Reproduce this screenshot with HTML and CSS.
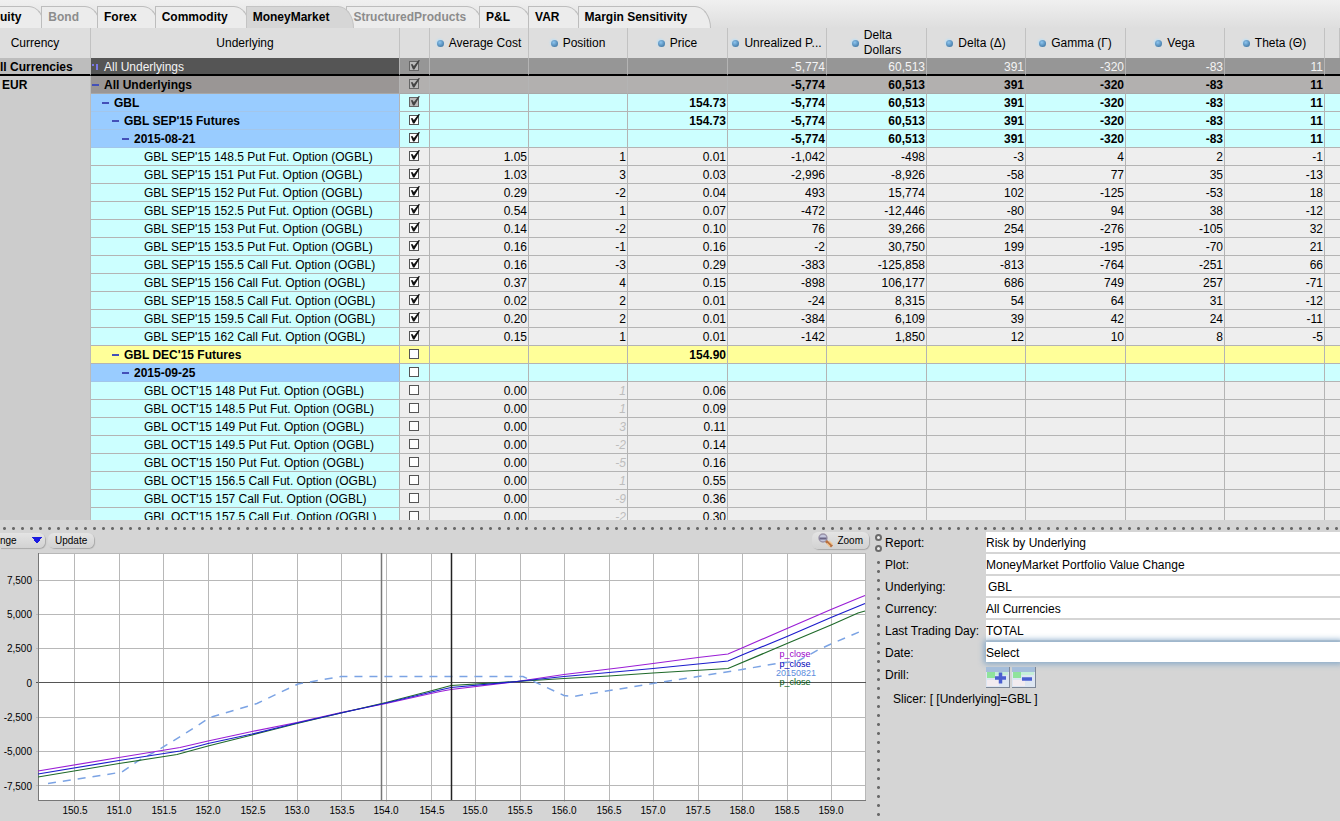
FILE: index.html
```html
<!DOCTYPE html>
<html lang="en">
<head>
<meta charset="utf-8">
<title>Risk by Underlying</title>
<link rel="stylesheet" href="styles.css">
<script src="app.js" defer></script>
</head>
<body>
<nav class="tabs">
  <button class="tab tab-first">uity</button>
  <button class="tab tab-off">Bond</button>
  <button class="tab">Forex</button>
  <button class="tab">Commodity</button>
  <button class="tab tab-active">MoneyMarket</button>
  <button class="tab tab-off tab-wide">StructuredProducts</button>
  <button class="tab">P&amp;L</button>
  <button class="tab">VAR</button>
  <button class="tab">Margin Sensitivity</button>
</nav>

<main class="grid-pane">
  <table class="grid">
    <colgroup>
      <col class="c-cur"><col class="c-name"><col class="c-check">
      <col class="c-a"><col class="c-a"><col class="c-b"><col class="c-a"><col class="c-b"><col class="c-a"><col class="c-b"><col class="c-a"><col class="c-b"><col>
    </colgroup>
    <thead>
      <tr>
        <th class="h-cur">Currency</th>
        <th>Underlying</th>
        <th></th>
        <th><span class="h"><i class="dot"></i>Average Cost</span></th>
        <th><span class="h"><i class="dot"></i>Position</span></th>
        <th><span class="h"><i class="dot"></i>Price</span></th>
        <th><span class="h"><i class="dot"></i>Unrealized P...</span></th>
        <th><span class="h"><i class="dot"></i><span>Delta<br>Dollars</span></span></th>
        <th><span class="h"><i class="dot"></i>Delta (Δ)</span></th>
        <th><span class="h"><i class="dot"></i>Gamma (Γ)</span></th>
        <th><span class="h"><i class="dot"></i>Vega</span></th>
        <th><span class="h"><i class="dot"></i>Theta (Θ)</span></th>
        <th></th>
      </tr>
    </thead>
    <tbody id="rows"></tbody>
  </table>
</main>

<div class="split-h"></div>

<section class="lower">
  <div class="plot-pane">
    <div class="toolbar">
      <select class="pill combo" aria-label="Plot type"><option>nge</option></select>
      <button class="pill update">Update</button>
      <button class="pill zoom">
        <svg width="16" height="15" viewBox="0 0 16 15" aria-hidden="true">
          <circle cx="5" cy="5" r="4" fill="#c3c6dd" stroke="#9a93a8" stroke-width="1.4"/>
          <path d="M1.500 5.500h7" stroke="#6a6585" stroke-width="2"/>
          <path d="M8 8l6 5.500" stroke="#b9703f" stroke-width="3"/>
          <path d="M9 10.500l3 3M11 8l3.500 3.500" stroke="#f3c48e" stroke-width="1.200"/>
        </svg>
        Zoom
      </button>
    </div>
    <svg class="chart" viewBox="0 549 873 272" role="img" aria-label="MoneyMarket Portfolio Value Change">
      <rect x="38" y="553" width="828" height="248" fill="#fff"/>
      <path class="gridline" d="M74.500 553v249M119.500 553v249M163.500 553v249M208.500 553v249M252.500 553v249M297.500 553v249M341.500 553v249M386.500 553v249M431.500 553v249M475.500 553v249M520.500 553v249M564.500 553v249M609.500 553v249M653.500 553v249M698.500 553v249M742.500 553v249M787.500 553v249M831.500 553v249"/>
      <path class="gridline" d="M36 580.500h830M36 614.500h830M36 648.500h830M36 717.500h830M36 751.500h830M36 785.500h830M38 553.500h828M865.500 553v248"/>
      <path d="M36 682.500h830" stroke="#555"/>
      <path d="M38.500 553v248M38 800.500h828" stroke="#777" fill="none"/>
      <path d="M381.500 553v247" stroke="#777" stroke-width="1.500"/>
      <path class="line dashed" d="M48 783.500L107 774.500 122 772 138 761 160 749 182 735.500 210 717.500 257 703.500 298 684 341 676.500H523L564 695.500 573 696.500 653 683.500 698 676.500 742 669.500 777 663.500 798 661 818 650 831 644 865 629.500"/>
      <path class="line" stroke="#9a1ed6" d="M38 771L119 757.500 180 747.500 208 741 252 731.500 297 722.500 341 712.500 386 703.500 440 691.500 451 689.500 517 681.500 564 674.500 622 667.500 653 663.500 698 657.500 728 654 742 648 787 628.500 831 609.500 860 597.500 865 595.500"/>
      <path class="line" stroke="#1f6a2a" d="M38 777L119 763.500 177 754.500 208 746 252 735 297 723.500 341 713 386 702.500 440 688.500 451 685.500 517 681.500 564 678.500 609 676 653 673 728 668.500 787 643.500 831 625 858 613 865 611"/>
      <path class="line" stroke="#1c1ccc" d="M38 774L119 760.500 180 751 208 743.500 252 734 297 723 341 713 386 703 440 690 451 687.500 517 681.500 564 676.500 609 672.500 653 668.500 728 661 742 655 787 636.500 831 617.500 865 603.500"/>
      <path d="M451.500 553v247" stroke="#222" stroke-width="1.500"/>
      <g class="axis" text-anchor="end">
        <text x="32" y="584">7,500</text><text x="32" y="618">5,000</text><text x="32" y="652">2,500</text><text x="32" y="687">0</text><text x="32" y="721">-2,500</text><text x="32" y="755">-5,000</text><text x="32" y="790">-7,500</text>
      </g>
      <g class="axis" text-anchor="middle">
        <text x="75" y="814">150.5</text><text x="119" y="814">151.0</text><text x="164" y="814">151.5</text><text x="208" y="814">152.0</text><text x="253" y="814">152.5</text><text x="297" y="814">153.0</text><text x="342" y="814">153.5</text><text x="386" y="814">154.0</text><text x="432" y="814">154.5</text><text x="475" y="814">155.0</text><text x="520" y="814">155.5</text><text x="564" y="814">156.0</text><text x="609" y="814">156.5</text><text x="653" y="814">157.0</text><text x="698" y="814">157.5</text><text x="742" y="814">158.0</text><text x="787" y="814">158.5</text><text x="831" y="814">159.0</text>
      </g>
      <g class="series" text-anchor="middle">
        <text x="795" y="657" fill="#9a00c8">p_close</text>
        <text x="795" y="667" fill="#0000b8">p_close</text>
        <text x="796" y="676" fill="#5c8cdd">20150821</text>
        <text x="795" y="685" fill="#005a10">p_close</text>
      </g>
    </svg>
  </div>

  <div class="split-v"><i class="ring"></i><i class="ring"></i><div class="dots"></div></div>

  <form class="params">
    <label for="f1">Report:</label><input id="f1" value="Risk by Underlying">
    <label for="f2">Plot:</label><input id="f2" value="MoneyMarket Portfolio Value Change">
    <label for="f3">Underlying:</label><input id="f3" class="inset" value="GBL">
    <label for="f4">Currency:</label><input id="f4" value="All Currencies">
    <label for="f5">Last Trading Day:</label><input id="f5" value="TOTAL">
    <label for="f6">Date:</label><input id="f6" class="focused" value="Select">
    <span class="label">Drill:</span>
    <div class="drill">
      <button type="button" aria-label="Drill in"><svg width="24" height="21" viewBox="0 0 24 21"><path d="M0 0h24v21H0z" fill="#dde6f2"/><path d="M0 0h24v5H0z" fill="#a5bedb"/><path d="M1 5h8v6H1z" fill="#8fe39c"/><path d="M9 5h13v3H9z" fill="#c5efd9"/><path d="M1 13h12v6H1z" fill="#f3ecf0"/><path d="M0 20.500h24M23.500 0v21" stroke="#7d8797"/><path d="M14.500 5.500v11M9 11h11" stroke="#4a5fd0" stroke-width="3.500"/></svg></button>
      <button type="button" aria-label="Drill out"><svg width="24" height="21" viewBox="0 0 24 21"><path d="M0 0h24v21H0z" fill="#dde6f2"/><path d="M0 0h24v5H0z" fill="#a5bedb"/><path d="M1 5h8v6H1z" fill="#8fe39c"/><path d="M9 5h13v3H9z" fill="#c5efd9"/><path d="M1 13h12v6H1z" fill="#f3ecf0"/><path d="M0 20.500h24M23.500 0v21" stroke="#7d8797"/><path d="M10 12h10" stroke="#4a5fd0" stroke-width="3.500"/></svg></button>
    </div>
    <p class="slicer">Slicer: [ [Underlying]=GBL ]</p>
  </form>
</section>
</body>
</html>
```
FILE: styles.css
```css
* { box-sizing: border-box; }
body {
  margin: 0;
  height: 100vh;
  display: flex;
  flex-direction: column;
  overflow: hidden;
  background: #d5d5d5;
  color: #000;
  font: 12px/15px "Liberation Sans", Arial, sans-serif;
}
button, input, select { font: inherit; color: inherit; margin: 0; border: 0; padding: 0; border-radius: 0; }

/* tabs */
.tabs {
  display: flex;
  flex: none;
  height: 28px;
  padding-top: 6px;
  background: linear-gradient(#f0f0f0, #dedede);
}
.tab {
  position: relative;
  padding: 0 21px 0 6px;
  margin-right: -4px;
  background: #ececec;
  border: solid #bdbdbd;
  border-width: 1px 1px 0 1px;
  border-top-right-radius: 16px 22px;
  font-weight: bold;
  white-space: nowrap;
}
.tab-first { padding: 0 23px 0 0; border-left: 0; }
.tab-off { color: #8c8c8c; }
.tab-active { z-index: 1; background: #d6d6d6; border-color: #c4c4c4; padding-right: 24px; margin-right: -8px; }
.tab-wide { padding-right: 16px; }
.tab:last-child { padding-right: 23px; }

/* grid */
.grid-pane { flex: none; height: calc(100vh - 329px); overflow: hidden; background: #eee; }
.grid { width: 100%; table-layout: fixed; border-collapse: separate; border-spacing: 0; }
.c-cur { width: 91px; }
.c-name { width: 309px; }
.c-check { width: 30px; }
.c-a { width: 99px; }
.c-b { width: 100px; }
.grid th {
  height: 30px;
  padding: 0;
  background: #dedede;
  border-right: 1px solid #c2c2c2;
  font-weight: normal;
  white-space: nowrap;
}
.grid th.h-cur { padding-right: 20px; }
.h { display: flex; align-items: center; justify-content: center; gap: 5px; text-align: left; }
.dot { width: 7px; height: 7px; border-radius: 50%; background: radial-gradient(circle at 40% 35%, #8cc4ee, #2f6593); box-shadow: -1px -1px 2px #bfe0f5; }
.grid td {
  height: 18px;
  padding: 2px 1px 0 0;
  line-height: 14px;
  text-align: right;
  vertical-align: top;
  background: #eee;
  border-right: 1px solid #b4b4b4;
  border-bottom: 1px solid #b4b4b4;
  white-space: nowrap;
}
.grid td:last-child { border-right: 0; }
.grid td.cur { background: #ccc; text-align: left; font-weight: bold; border-right-color: #bbb; }
.grid td.eur { padding-left: 2px; }
.grid td.name { background: #cff; text-align: left; }
.grid td.check { padding: 3px 1px 0 0; }
.grid td.ghost { color: #bdbdbd; font-style: italic; }
.grid .group td:not(.cur) { background: #cff; font-weight: bold; }
.grid .group td.name { background: #9cf; border-bottom-color: #a3c6ea; }
.grid .mark td:not(.cur), .grid .mark td.name { background: #ff9; border-bottom-color: #b4b4b4; }
.grid .total td { background: #969696; color: #f4f4f4; border-bottom: 2px solid #000; }
.grid .total td.name { background: #555; }
.grid .total td.cur { background: #bdbdbd; color: #000; }
.grid .sub td:not(.cur) { background: #b2b0af; font-weight: bold; border-bottom-color: #a8a8a8; }
.grid .sub td.name { background: #9a9695; }
.lv { display: flex; align-items: center; }
.lv0 { padding-left: 1px; } .lv1 { padding-left: 11px; } .lv2 { padding-left: 21px; } .lv3 { padding-left: 31px; } .lv5 { padding-left: 53px; }
.toggle { width: 7px; height: 2px; margin-right: 5px; background: #4450b8; }
.toggle-all { height: 6px; background: linear-gradient(90deg, #7a78e8 2px, transparent 2px 4px, #7a78e8 4px) 0 0 / 6px 2px no-repeat, linear-gradient(#7a78e8, #7a78e8) 4px 0 / 2px 6px no-repeat; }
.box {
  appearance: none;
  position: relative;
  display: block;
  width: 10px;
  height: 10px;
  margin: 0 auto;
  background: #fff;
  border: 1px solid #555;
}
.box:checked::after {
  content: "";
  position: absolute;
  left: 0;
  top: -2px;
  width: 10px;
  height: 10px;
  background: #111;
  clip-path: polygon(8% 42%, 28% 42%, 38% 62%, 84% 2%, 100% 2%, 44% 96%, 30% 96%);
}
.box.dim { background: #bbb; border-color: #666; }
.box.dim:checked::after { background: #444; }

/* splitters */
.split-h {
  flex: none;
  height: 12px;
  background: radial-gradient(circle, #6a6a6a 1px, transparent 2px) 0 4px / 9px 9px repeat-x;
}
.split-v { display: flex; flex-direction: column; align-items: center; gap: 4px; padding-top: 2px; }
.ring { width: 7px; height: 7px; border: 2px solid #6a6a6a; border-radius: 50%; background: #eee; }
.dots { flex: 1; width: 9px; margin-top: 2px; background: radial-gradient(circle, #6a6a6a 1px, transparent 2px) 0 0 / 9px 9px repeat-y; }

/* lower half */
.lower { flex: none; height: 289px; display: grid; grid-template-columns: minmax(0, 873fr) 11px minmax(0, 456fr); }
.toolbar { display: flex; align-items: center; height: 17px; gap: 3px; }
.pill {
  height: 15px;
  font-size: 10px;
  line-height: 15px;
  background: linear-gradient(#e4e4e4, #d2d2d2);
  border-radius: 6px;
  box-shadow: 1px 1px 1px #a9a9a9;
}
.combo {
  appearance: none;
  width: 45px;
  border-radius: 0 6px 6px 0;
  background: linear-gradient(to bottom right, #1a1ae0 50%, transparent 51%) 37px 4px / 5px 7px no-repeat, linear-gradient(to bottom left, #1a1ae0 50%, transparent 51%) 32px 4px / 5px 7px no-repeat, linear-gradient(#e4e4e4, #d2d2d2);
}
.update { padding: 0 7px; }
.zoom { display: flex; align-items: center; gap: 3px; height: 17px; margin-left: auto; margin-right: 4px; padding: 0 6px; }
.chart { display: block; width: 100%; font-family: "Liberation Sans", Arial, sans-serif; }
.gridline { stroke: #b8b8b8; fill: none; }
.line { fill: none; stroke-width: 1.2; }
.dashed { stroke: #7ba3e4; stroke-dasharray: 8 7; stroke-width: 1.5; }
.axis { font-size: 10px; fill: #000; }
.series { font-size: 9px; }

/* parameters */
.params { display: grid; grid-template-columns: 100px minmax(0, 1fr); grid-auto-rows: 22px; align-content: start; padding-left: 1px; line-height: 22px; white-space: nowrap; }
.params input { height: 20px; width: 100%; margin-left: 1px; padding-top: 2px; background: #fff; }
.params .inset { padding-left: 2px; }
.params .focused { outline: 0; box-shadow: 0 0 6px 2px #86a9c9; }
.drill { display: flex; gap: 2px; padding: 3px 0 0 1px; }
.drill button { width: 24px; height: 21px; background: none; }
.drill svg { display: block; }
.slicer { grid-column: 1 / -1; margin: 2px 0 0 8px; }
```
FILE: app.js
```js
// kind, level, name, checkbox state, [cost, position, price, pnl, dollars, delta, gamma, vega, theta]
const sums = "-5,774|60,513|391|-320|-83|11";
const rows = [
  ["total", 0, "All Underlyings", "dim", "|||" + sums],
  ["sub", 0, "All Underlyings", "dim", "|||" + sums],
  ["group", 1, "GBL", "dim", "||154.73|" + sums],
  ["group", 2, "GBL SEP'15 Futures", "on", "||154.73|" + sums],
  ["group", 3, "2015-08-21", "on", "|||" + sums],
  ["leaf", 5, "GBL SEP'15 148.5 Put Fut. Option (OGBL)", "on", "1.05|1|0.01|-1,042|-498|-3|4|2|-1"],
  ["leaf", 5, "GBL SEP'15 151 Put Fut. Option (OGBL)", "on", "1.03|3|0.03|-2,996|-8,926|-58|77|35|-13"],
  ["leaf", 5, "GBL SEP'15 152 Put Fut. Option (OGBL)", "on", "0.29|-2|0.04|493|15,774|102|-125|-53|18"],
  ["leaf", 5, "GBL SEP'15 152.5 Put Fut. Option (OGBL)", "on", "0.54|1|0.07|-472|-12,446|-80|94|38|-12"],
  ["leaf", 5, "GBL SEP'15 153 Put Fut. Option (OGBL)", "on", "0.14|-2|0.10|76|39,266|254|-276|-105|32"],
  ["leaf", 5, "GBL SEP'15 153.5 Put Fut. Option (OGBL)", "on", "0.16|-1|0.16|-2|30,750|199|-195|-70|21"],
  ["leaf", 5, "GBL SEP'15 155.5 Call Fut. Option (OGBL)", "on", "0.16|-3|0.29|-383|-125,858|-813|-764|-251|66"],
  ["leaf", 5, "GBL SEP'15 156 Call Fut. Option (OGBL)", "on", "0.37|4|0.15|-898|106,177|686|749|257|-71"],
  ["leaf", 5, "GBL SEP'15 158.5 Call Fut. Option (OGBL)", "on", "0.02|2|0.01|-24|8,315|54|64|31|-12"],
  ["leaf", 5, "GBL SEP'15 159.5 Call Fut. Option (OGBL)", "on", "0.20|2|0.01|-384|6,109|39|42|24|-11"],
  ["leaf", 5, "GBL SEP'15 162 Call Fut. Option (OGBL)", "on", "0.15|1|0.01|-142|1,850|12|10|8|-5"],
  ["group mark", 2, "GBL DEC'15 Futures", "", "||154.90||||||"],
  ["group", 3, "2015-09-25", "", "||||||||"],
  ["leaf", 5, "GBL OCT'15 148 Put Fut. Option (OGBL)", "", "0.00|1|0.06||||||"],
  ["leaf", 5, "GBL OCT'15 148.5 Put Fut. Option (OGBL)", "", "0.00|1|0.09||||||"],
  ["leaf", 5, "GBL OCT'15 149 Put Fut. Option (OGBL)", "", "0.00|3|0.11||||||"],
  ["leaf", 5, "GBL OCT'15 149.5 Put Fut. Option (OGBL)", "", "0.00|-2|0.14||||||"],
  ["leaf", 5, "GBL OCT'15 150 Put Fut. Option (OGBL)", "", "0.00|-5|0.16||||||"],
  ["leaf", 5, "GBL OCT'15 156.5 Call Fut. Option (OGBL)", "", "0.00|1|0.55||||||"],
  ["leaf", 5, "GBL OCT'15 157 Call Fut. Option (OGBL)", "", "0.00|-9|0.36||||||"],
  ["leaf", 5, "GBL OCT'15 157.5 Call Fut. Option (OGBL)", "", "0.00|-2|0.30||||||"],
];

document.getElementById("rows").innerHTML = rows.map(([kind, level, name, state, values], i) => {
  const currency = i === 0 ? '<td class="cur">ll Currencies</td>'
    : i === 1 ? `<td class="cur eur" rowspan="${rows.length - 1}">EUR</td>` : "";
  const toggle = level === 5 ? "" : `<button class="toggle${i === 0 ? " toggle-all" : ""}" aria-label="Toggle ${name}"></button>`;
  const box = `<input type="checkbox" class="box${state === "dim" ? " dim" : ""}" aria-label="Include ${name}"${state ? " checked" : ""}>`;
  const cells = values.split("|").map((v, c) =>
    `<td${c === 1 && !state ? ' class="ghost"' : ""}>${v}</td>`).join("");
  return `<tr class="${kind}">${currency}<td class="name"><span class="lv lv${level}">${toggle}${name}</span></td><td class="check">${box}</td>${cells}<td></td></tr>`;
}).join("");
```
